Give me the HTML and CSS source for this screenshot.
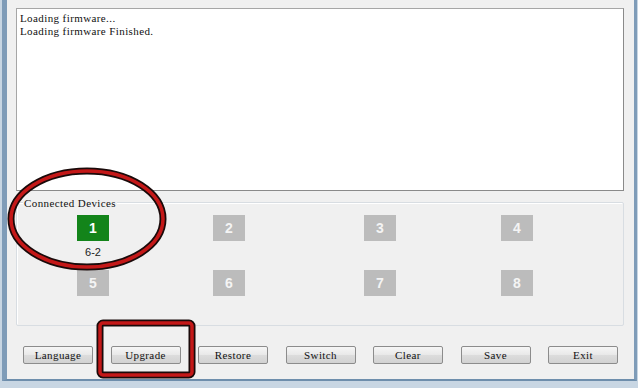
FILE: index.html
```html
<!DOCTYPE html>
<html lang="en">
<head>
    <meta charset="UTF-8">
    <title>Firmware Tool</title>
    <link rel="stylesheet" href="styles.css">
</head>
<body>

    <div class="window">
        <!-- Log output -->
        <div class="log">
            <div>Loading firmware...</div>
            <div>Loading firmware Finished.</div>
        </div>

        <!-- Device slots -->
        <div class="group">
            <span class="group-title">Connected Devices</span>
            <div class="slots">
                <div class="slot"><div class="tile on">1</div><div class="slot-label">6-2</div></div>
                <div class="slot"><div class="tile">2</div></div>
                <div class="slot"><div class="tile">3</div></div>
                <div class="slot"><div class="tile">4</div></div>
                <div class="slot"><div class="tile">5</div></div>
                <div class="slot"><div class="tile">6</div></div>
                <div class="slot"><div class="tile">7</div></div>
                <div class="slot"><div class="tile">8</div></div>
            </div>
        </div>

        <!-- Actions -->
        <div class="actions">
            <button>Language</button>
            <button>Upgrade</button>
            <button>Restore</button>
            <button>Switch</button>
            <button>Clear</button>
            <button>Save</button>
            <button>Exit</button>
        </div>
    </div>

    <!-- Red markers drawn on top -->
    <svg class="marks" width="638" height="388" viewBox="0 0 638 388">
        <ellipse cx="87" cy="219" rx="76" ry="48" fill="none" stroke="#1a0a0a" stroke-width="7"/>
        <ellipse cx="87" cy="219" rx="76" ry="48" fill="none" stroke="#c41818" stroke-width="3.5"/>
        <rect x="100" y="323" width="92" height="52" rx="3" fill="none" stroke="#1a0a0a" stroke-width="7"/>
        <rect x="100" y="323" width="92" height="52" rx="3" fill="none" stroke="#c41818" stroke-width="3.5"/>
    </svg>

</body>
</html>
```

FILE: styles.css
```css
body {
    margin: 0;
    background: #c8d6e3;
    font-family: 'Liberation Serif', serif;
    font-size: 11px;
    letter-spacing: 0.4px;
    color: #111;
}
.window {
    margin: 0 1px 0 2px;
    height: 381px;
    box-sizing: border-box;
    border-left: 5px solid #7f9cb8;
    border-right: 3px solid #7f9cb8;
    border-bottom: 2px solid #6e8eac;
    background: #f0f0f0;
    padding: 8px 10px 0 9px;
}
.log {
    height: 183px;
    box-sizing: border-box;
    background: #fff;
    border: 1px solid #8a8a8a;
    border-top-color: #a6a6a6;
    border-left-color: #a6a6a6;
    padding: 3px 3px;
    line-height: 13px;
}
.group {
    margin-top: 11px;
    height: 124px;
    box-sizing: border-box;
    border: 1px solid #d8dde2;
    border-radius: 2px;
    box-shadow: inset 1px 1px #fff;
}
.group-title {
    display: inline-block;
    margin: -5px 0 0 6px;
    padding: 0 1px;
    line-height: 10px;
    background: #f0f0f0;
    vertical-align: top;
}
.slots {
    display: grid;
    grid-template-columns: 136px 151px 137px 32px;
    grid-auto-rows: 55px;
    padding: 0 0 0 60px;
}
.slot {
    width: 32px;
    display: flex;
    flex-direction: column;
    align-items: center;
}
.tile {
    width: 32px;
    height: 26px;
    background: #bcbcbc;
    color: #f4f4f4;
    font-family: 'Liberation Sans', sans-serif;
    font-weight: bold;
    font-size: 14px;
    letter-spacing: 0;
    line-height: 26px;
    text-align: center;
}
.tile.on {
    background: #13841a;
    color: #fff;
}
.slot-label {
    margin-top: 5px;
    font-family: 'Liberation Sans', sans-serif;
    font-size: 11px;
    letter-spacing: 0;
    color: #222;
}
.actions {
    margin-top: 20px;
    padding: 0 6px 0 7px;
    display: flex;
    justify-content: space-between;
}
button {
    width: 70px;
    height: 18px;
    padding: 0;
    font-family: 'Liberation Serif', serif;
    font-size: 11px;
    letter-spacing: 0.4px;
    color: #111;
    border: 1px solid #8c8c8c;
    border-radius: 2px;
    background: linear-gradient(#f6f6f6, #e8e8e8 50%, #dcdcdc 51%, #d2d2d2);
}
.marks {
    position: absolute;
    top: 0;
    left: 0;
    pointer-events: none;
}
```
